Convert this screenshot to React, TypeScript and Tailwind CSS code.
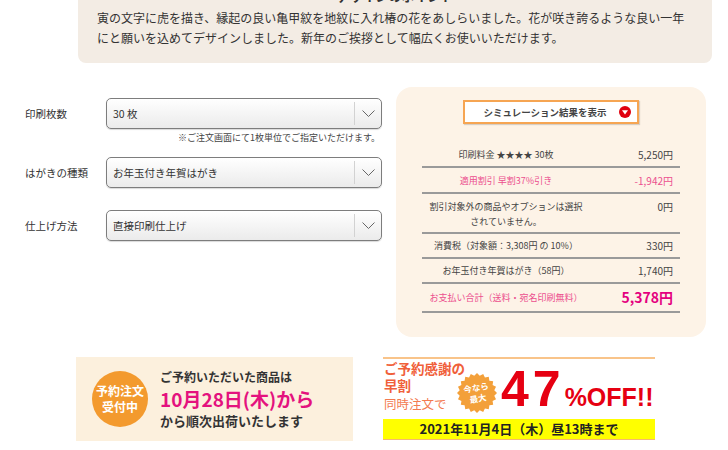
import React from "react";

const Chevron = () => (
  <svg width="13" height="7" viewBox="0 0 13 7">
    <path d="M0.5 0.5L6.5 6.5L12.5 0.5" fill="none" stroke="#666" strokeWidth="1" />
  </svg>
);

function Select({ value }: { value: string }) {
  return (
    <div className="flex h-[31px] w-[276px] items-stretch rounded-[5px] border border-[#7d7d7d] bg-linear-to-b from-white to-[#ebebeb] shadow-[0_1px_1px_rgba(0,0,0,0.15)]">
      <div className="flex flex-1 items-center pl-[6px] text-[10.5px] text-[#333]">{value}</div>
      <div className="my-[3px] w-px bg-[#d2d2d2]" />
      <div className="flex w-[26px] items-center justify-center">
        <Chevron />
      </div>
    </div>
  );
}

function StarBurst() {
  const pts: string[] = [];
  for (let i = 0; i < 40; i++) {
    const r = i % 2 === 0 ? 20 : 17.5;
    const a = (Math.PI * 2 * i) / 40;
    pts.push(`${(20 + r * Math.sin(a)).toFixed(2)},${(20 - r * Math.cos(a)).toFixed(2)}`);
  }
  return (
    <svg width="40" height="40" viewBox="0 0 40 40" className="absolute inset-0">
      <polygon points={pts.join(" ")} fill="#f3a03a" />
    </svg>
  );
}

type RowProps = { label: React.ReactNode; value: React.ReactNode; h: string; pink?: boolean; top?: boolean };

function Row({ label, value, h, pink, top }: RowProps) {
  return (
    <div className={`flex border-b-2 border-[#9a9a9a] ${h} ${top ? "items-start pt-[5px]" : "items-center"} ${pink ? "text-[#ec4f8e]" : "text-[#444]"}`}>
      <div className="w-[168px] text-center text-[9px] leading-[15px]">{label}</div>
      <div className="flex-1 pr-[7px] text-right text-[10px] leading-[15px]">{value}</div>
    </div>
  );
}

export default function App() {
  return (
    <div className="h-[450px] w-[728px] overflow-hidden bg-white font-['Noto_Sans_CJK_JP','Noto_Sans',sans-serif] text-[#333]">
      {/* description box */}
      <div className="ml-[78px] h-[63px] w-[634px] overflow-hidden rounded-b-[8px] bg-[#f3ece4]">
        <div className="-mt-[14px] h-[20px] text-center text-[13px] font-bold leading-[20px] text-[#333]">デザインのポイント</div>
        <p className="mt-[2px] pl-[19px] text-[12px] leading-[20px] text-[#333]">
          寅の文字に虎を描き、縁起の良い亀甲紋を地紋に入れ椿の花をあしらいました。花が咲き誇るような良い一年
          <br />
          にと願いを込めてデザインしました。新年のご挨拶として幅広くお使いいただけます。
        </p>
      </div>

      {/* form + simulation */}
      <div className="mt-[24px] flex">
        <div className="pl-[25px] pt-[11px]">
          <div className="flex items-center">
            <div className="w-[81px] text-[10.5px]">印刷枚数</div>
            <Select value="30 枚" />
          </div>
          <div className="mt-[3px] h-[12px] pr-[2px] text-right text-[9px] leading-[12px] text-[#444]">
            ※ご注文画面にて1枚単位でご指定いただけます。
          </div>
          <div className="mt-[13px] flex items-center">
            <div className="w-[81px] text-[10.5px]">はがきの種類</div>
            <Select value="お年玉付き年賀はがき" />
          </div>
          <div className="mt-[22px] flex items-center">
            <div className="w-[81px] text-[10.5px]">仕上げ方法</div>
            <Select value="直接印刷仕上げ" />
          </div>
        </div>

        <div className="ml-[14px] h-[250px] w-[310px] rounded-[16px] bg-[#fdf3e7] px-[26px] pt-[13px]">
          <div className="mx-auto flex h-[24px] w-[176px] items-center justify-center gap-[12px] border-2 border-[#f6a552] bg-white pl-[12px] shadow-[1px_1px_1px_rgba(0,0,0,0.15)]">
            <span className="text-[9.5px] font-bold text-[#444]">シミュレーション結果を表示</span>
            <svg width="12" height="12" viewBox="0 0 12 12">
              <circle cx="6" cy="6" r="6" fill="#e0000f" />
              <path d="M3 4.2H9L6 8.6Z" fill="#fff" />
            </svg>
          </div>
          <div className="mt-[19px]">
            <Row h="h-[25px]" label="印刷料金 ★★★★ 30枚" value="5,250円" />
            <Row h="h-[26px]" pink label="適用割引 早割37%引き" value="-1,942円" />
            <Row
              h="h-[40px]"
              top
              label={
                <>
                  割引対象外の商品やオプションは選択
                  <br />
                  されていません。
                </>
              }
              value="0円"
            />
            <Row h="h-[25px]" label="消費税（対象額：3,308円 の 10%）" value="330円" />
            <Row h="h-[25px]" label="お年玉付き年賀はがき（58円）" value="1,740円" />
            <Row
              h="h-[29px]"
              pink
              label="お支払い合計（送料・宛名印刷無料）"
              value={<span className="text-[14px] font-bold text-[#e4007f]">5,378円</span>}
            />
          </div>
        </div>
      </div>

      {/* banners */}
      <div className="mt-[20px] flex">
        <div className="ml-[76px] flex h-[84px] w-[277px] items-center bg-[#fcf0dd] pl-[16px]">
          <div className="flex h-[56px] w-[56px] flex-col items-center justify-center rounded-full bg-[#f39a2e] text-[12px] font-bold leading-[16px] text-white">
            <span>予約注文</span>
            <span>受付中</span>
          </div>
          <div className="ml-[12px] flex flex-col font-bold text-[#333]">
            <span className="text-[12px] leading-[18px]">ご予約いただいた商品は</span>
            <span className="text-[19px] leading-[26px] text-[#e4127e]">10月28日(木)から</span>
            <span className="text-[13px] leading-[18px]">から順次出荷いたします</span>
          </div>
        </div>

        <div className="ml-[30px] flex w-[272px] flex-col">
          <div className="h-[2px] bg-[#f9c48a]" />
          <div className="flex h-[60px] items-center">
            <div className="flex w-[74px] shrink-0 flex-col self-start whitespace-nowrap pl-[1px] pt-[1px] text-[#f0603a]">
              <span className="text-[13.5px] font-bold leading-[17px]">ご予約感謝の</span>
              <span className="text-[13.5px] font-bold leading-[17px]">早割</span>
              <span className="text-[12.5px] leading-[19px] text-[#f37a50]">同時注文で</span>
            </div>
            <div className="relative mt-[8px] h-[40px] w-[40px] shrink-0">
              <StarBurst />
              <div className="relative flex h-full -rotate-[10deg] flex-col items-center justify-center text-[8.5px] font-bold leading-[11px] text-white">
                <span>今なら</span>
                <span>最大</span>
              </div>
            </div>
            <div className="ml-[4px] flex items-baseline font-['Liberation_Sans',sans-serif] font-bold text-[#e60012]">
              <span className="text-[50px] leading-none tracking-[4px]">47</span>
              <span className="text-[25px] leading-none">%OFF!!</span>
            </div>
          </div>
          <div className="flex h-[21px] items-center justify-center border-b border-[#f6b870] bg-[#ffff00] text-[13px] font-bold text-[#222]">
            2021年11月4日（木）昼13時まで
          </div>
        </div>
      </div>
    </div>
  );
}
